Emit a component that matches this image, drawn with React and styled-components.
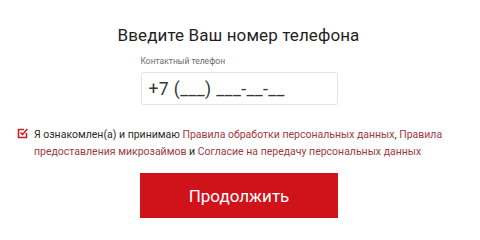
import styled, { createGlobalStyle } from "styled-components";

const GlobalStyle = createGlobalStyle`
  html, body {
    margin: 0;
    padding: 0;
    background: #ffffff;
  }
  body {
    font-family: Roboto, "Liberation Sans", sans-serif;
  }
`;

const Page = styled.div`
  width: 480px;
  height: 226px;
  box-sizing: border-box;
  padding: 24px 0 0 0;
  display: flex;
  flex-direction: column;
  align-items: center;
`;

const Title = styled.h1`
  margin: 0 0 0 -3px;
  font-size: 17px;
  line-height: 22px;
  font-weight: 400;
  letter-spacing: 0.1px;
  color: #1f1f1f;
`;

const Field = styled.div`
  width: 197px;
  margin: 10px 0 0 -2px;
  display: flex;
  flex-direction: column;
`;

const Label = styled.label`
  font-size: 8.5px;
  line-height: 10px;
  color: #6b6b6b;
  margin-bottom: 6px;
`;

const PhoneInput = styled.input`
  box-sizing: border-box;
  width: 100%;
  height: 33px;
  padding: 0 7px;
  border: 1px solid #e6e6e6;
  border-radius: 2px;
  font-family: inherit;
  font-size: 17.5px;
  letter-spacing: 0.4px;
  color: #333333;
  outline: none;
  &::placeholder {
    color: #383838;
  }
`;

const Consent = styled.div`
  align-self: stretch;
  margin: 21px 0 0 17px;
  display: flex;
  gap: 6px;
`;

const Check = styled.span`
  flex: none;
  width: 11px;
  height: 11px;
  margin-top: 2px;
  display: inline-flex;
`;

const ConsentText = styled.p`
  margin: 0;
  width: 425px;
  font-size: 10.5px;
  line-height: 17px;
  color: #2a2a2a;
`;

const Link = styled.a`
  color: #9e3a40;
  text-decoration: none;
`;

const Submit = styled.button`
  margin: 13px 0 0 -2px;
  width: 198px;
  height: 45px;
  border: none;
  border-radius: 0;
  background: #d0121b;
  color: #ffffff;
  font-family: inherit;
  font-size: 17px;
  cursor: pointer;
`;

function CheckIcon() {
  return (
    <svg width="11" height="11" viewBox="0 0 11 11" fill="none">
      <path d="M7 1.5H1.5V9.5H9.5V5" stroke="#c8202a" strokeWidth="1.6" />
      <path d="M3.5 4.5L5.5 6.5L10.3 1" stroke="#c8202a" strokeWidth="1.6" />
    </svg>
  );
}

export default function App() {
  return (
    <>
      <GlobalStyle />
      <Page>
        <Title>Введите Ваш номер телефона</Title>
        <Field>
          <Label htmlFor="phone">Контактный телефон</Label>
          <PhoneInput id="phone" placeholder="+7 (___) ___-__-__" />
        </Field>
        <Consent>
          <Check>
            <CheckIcon />
          </Check>
          <ConsentText>
            Я ознакомлен(а) и принимаю <Link href="#">Правила обработки персональных данных</Link>,{" "}
            <Link href="#">Правила предоставления микрозаймов</Link> и{" "}
            <Link href="#">Согласие на передачу персональных данных</Link>
          </ConsentText>
        </Consent>
        <Submit type="button">Продолжить</Submit>
      </Page>
    </>
  );
}
